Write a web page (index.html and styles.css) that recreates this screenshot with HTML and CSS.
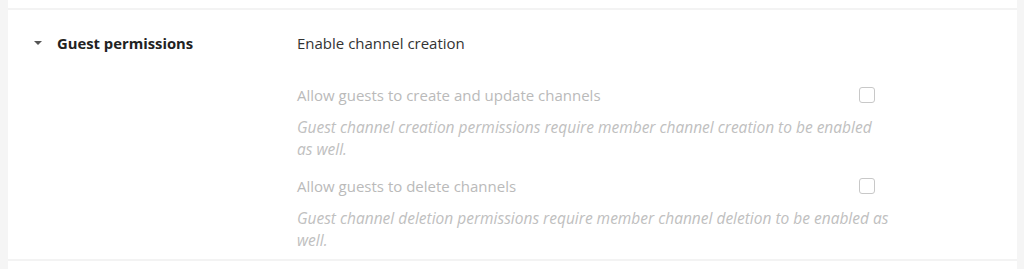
FILE: index.html
```html
<!DOCTYPE html>
<html lang="en">
<head>
    <meta charset="UTF-8">
    <title>Guest permissions</title>
    <link rel="stylesheet" href="styles.css">
</head>
<body>
    <div class="card">
        <div class="prev"></div>
        <div class="section">
            <div class="section-title">
                <span class="caret"></span>
                <span>Guest permissions</span>
            </div>
            <div class="section-body">
                <div class="setting-head">Enable channel creation</div>

                <div class="sub-setting first">
                    <div class="sub-row">
                        <span class="sub-label">Allow guests to create and update channels</span>
                        <span class="checkbox"></span>
                    </div>
                    <div class="sub-desc">Guest channel creation permissions require member channel creation to be enabled as well.</div>
                </div>

                <div class="sub-setting">
                    <div class="sub-row">
                        <span class="sub-label">Allow guests to delete channels</span>
                        <span class="checkbox"></span>
                    </div>
                    <div class="sub-desc">Guest channel deletion permissions require member channel deletion to be enabled as well.</div>
                </div>
            </div>
        </div>
        <div class="next"></div>
    </div>
</body>
</html>
```

FILE: styles.css
```css
body {
    margin: 0;
    padding: 0 7px 0 8px;
    background-color: #f5f5f5;
    font-family: "Open Sans", "Noto Sans", Arial, sans-serif;
    font-size: 15px;
    line-height: 22px;
}
.card {
    background: white;
    height: 269px;
}
.prev {
    height: 8px;
}
.section {
    display: flex;
    border-top: 2px solid #f3f3f3;
    border-bottom: 2px solid #f3f3f3;
    padding: 22px 0 8px;
}
.section-title {
    width: 289px;
    display: flex;
    align-items: center;
    height: 22px;
    font-weight: bold;
    color: #222;
    font-size: 14.8px;
}
.caret {
    width: 0;
    height: 0;
    margin: 0 15px 0 26px;
    border-left: 4px solid transparent;
    border-right: 4px solid transparent;
    border-top: 4px solid #555;
}
.section-body {
    width: 600px;
}
.setting-head {
    color: #333;
}
.sub-setting {
    margin-top: 15px;
}
.sub-setting.first {
    margin-top: 30px;
}
.sub-row {
    display: flex;
    justify-content: space-between;
    align-items: center;
    width: 578px;
}
.sub-label {
    color: #bababa;
}
.checkbox {
    width: 14px;
    height: 14px;
    border: 1px solid #c8c8c8;
    border-radius: 3px;
}
.sub-desc {
    width: 593px;
    margin-top: 10px;
    color: #c0c0c0;
    font-style: italic;
    font-size: 15.5px;
}
```
